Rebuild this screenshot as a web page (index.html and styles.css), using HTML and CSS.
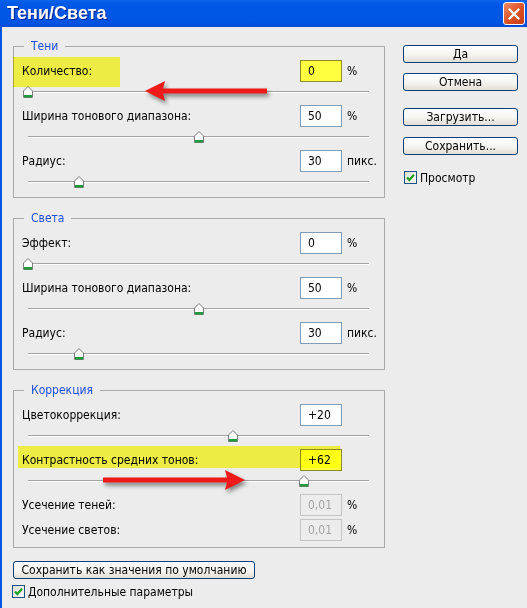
FILE: index.html
```html
<!DOCTYPE html>
<html lang="ru">
<head>
  <meta charset="UTF-8" />
  <title>Тени/Света</title>
  <link rel="stylesheet" href="styles.css">
</head>
<body>
  <!-- shared slider thumb -->
  <svg width="0" height="0" class="defs">
    <symbol id="thumb" viewBox="0 0 10 12">
      <path d="M0.5 5 L5 0.5 L9.5 5 L9.5 11.5 L0.5 11.5 Z" fill="#fff" stroke="#7d7d7d" />
      <rect x="1" y="9" width="8" height="2.5" fill="#1f9a3c" />
    </symbol>
  </svg>

  <div class="window">
    <div class="titlebar">
      <span class="title">Тени/Света</span>
      <span class="close">
        <svg width="12" height="12" viewBox="0 0 12 12">
          <path d="M1.5 1.5 L10.5 10.5 M10.5 1.5 L1.5 10.5" stroke="#fff" stroke-width="2.4" stroke-linecap="round" />
        </svg>
      </span>
    </div>

    <div class="content">
      <div class="main">
        <!-- Shadows -->
        <fieldset class="group">
          <legend>Тени</legend>
          <div class="field">
            <label>Количество:</label>
            <input class="num hot" value="0">
            <span class="unit">%</span>
          </div>
          <div class="slider"><div class="track"><svg class="thumb" style="left:0%"><use href="#thumb"/></svg></div></div>
          <div class="field">
            <label>Ширина тонового диапазона:</label>
            <input class="num" value="50">
            <span class="unit">%</span>
          </div>
          <div class="slider"><div class="track"><svg class="thumb" style="left:50%"><use href="#thumb"/></svg></div></div>
          <div class="field">
            <label>Радиус:</label>
            <input class="num" value="30">
            <span class="unit">пикс.</span>
          </div>
          <div class="slider"><div class="track"><svg class="thumb" style="left:15%"><use href="#thumb"/></svg></div></div>
        </fieldset>

        <!-- Highlights -->
        <fieldset class="group">
          <legend>Света</legend>
          <div class="field">
            <label>Эффект:</label>
            <input class="num" value="0">
            <span class="unit">%</span>
          </div>
          <div class="slider"><div class="track"><svg class="thumb" style="left:0%"><use href="#thumb"/></svg></div></div>
          <div class="field">
            <label>Ширина тонового диапазона:</label>
            <input class="num" value="50">
            <span class="unit">%</span>
          </div>
          <div class="slider"><div class="track"><svg class="thumb" style="left:50%"><use href="#thumb"/></svg></div></div>
          <div class="field">
            <label>Радиус:</label>
            <input class="num" value="30">
            <span class="unit">пикс.</span>
          </div>
          <div class="slider"><div class="track"><svg class="thumb" style="left:15%"><use href="#thumb"/></svg></div></div>
        </fieldset>

        <!-- Adjustments -->
        <fieldset class="group last">
          <legend>Коррекция</legend>
          <div class="field">
            <label>Цветокоррекция:</label>
            <input class="num" value="+20">
            <span class="unit"></span>
          </div>
          <div class="slider"><div class="track"><svg class="thumb" style="left:60%"><use href="#thumb"/></svg></div></div>
          <div class="field">
            <label>Контрастность средних тонов:</label>
            <input class="num hot" value="+62">
            <span class="unit"></span>
          </div>
          <div class="slider"><div class="track"><svg class="thumb" style="left:81%"><use href="#thumb"/></svg></div></div>
          <div class="field">
            <label>Усечение теней:</label>
            <input class="num" value="0,01" disabled>
            <span class="unit">%</span>
          </div>
          <div class="field gap">
            <label>Усечение светов:</label>
            <input class="num" value="0,01" disabled>
            <span class="unit">%</span>
          </div>
        </fieldset>

        <button class="btn wide">Сохранить как значения по умолчанию</button>
        <div class="check bottom">
          <span class="box"><svg width="11" height="11" viewBox="0 0 11 11"><path d="M2 5.5 L4.3 8 L9 2.8" fill="none" stroke="#21a121" stroke-width="2.2" /></svg></span>
          Дополнительные параметры
        </div>
      </div>

      <div class="side">
        <button class="btn">Да</button>
        <button class="btn cancel">Отмена</button>
        <button class="btn load">Загрузить...</button>
        <button class="btn save">Сохранить...</button>
        <div class="check preview">
          <span class="box"><svg width="11" height="11" viewBox="0 0 11 11"><path d="M2 5.5 L4.3 8 L9 2.8" fill="none" stroke="#21a121" stroke-width="2.2" /></svg></span>
          Просмотр
        </div>
      </div>
    </div>

    <!-- marker highlights and arrows drawn over the dialog -->
    <div class="mark mark-1"></div>
    <div class="mark mark-2"></div>
    <svg class="arrows" width="527" height="608" viewBox="0 0 527 608">
      <path d="M145 91 L165 81 L163 88.5 L267 88.5 L267 93.5 L163 93.5 L165 101 Z" />
      <path d="M103 477.5 L227 477.5 L225 470 L245 480 L225 490 L227 482.5 L103 482.5 Z" />
    </svg>
  </div>
</body>
</html>
```

FILE: styles.css
```css
/* General */
body {
  margin: 0;
  font-family: "DejaVu Sans Condensed", "DejaVu Sans", Verdana, sans-serif;
  font-stretch: condensed;
  font-size: 12px;
  background: #ececec;
}
.defs {
  position: absolute;
}
.window {
  position: relative;
  width: 527px;
  height: 608px;
  overflow: hidden;
  background: #ececec;
}
/* Title bar */
.titlebar {
  height: 27px;
  display: flex;
  align-items: center;
  justify-content: space-between;
  padding: 0 2px 0 7px;
  background: linear-gradient(#0b64ee, #0058e6 15%, #0054e3 85%, #0049d2);
  color: #fff;
}
.title {
  font-family: "Liberation Sans", Arial, sans-serif;
  font-stretch: normal;
  font-size: 18px;
  font-weight: bold;
  text-shadow: 1px 1px 0 #0a2390;
}
.close {
  width: 22px;
  height: 23px;
  box-sizing: border-box;
  border: 1px solid #fff;
  border-radius: 3px;
  background: linear-gradient(135deg, #f08a64, #dc4f24 55%, #c53c16);
  display: flex;
  align-items: center;
  justify-content: center;
}
/* Dialog body */
.content {
  display: flex;
  height: 581px;
  box-sizing: border-box;
  border-left: 2px solid #0055e5;
  padding: 12px 0 0 11px;
}
.main {
  width: 372px;
}
.side {
  width: 115px;
  margin-left: 18px;
  padding-top: 6px;
}
/* Group boxes */
.group {
  margin: 0;
  padding: 7px 0 2px 8px;
  border: 1px solid #a9a9a9;
  min-width: 0;
}
.group + .group {
  margin-top: 13px;
}
.group.last {
  padding-bottom: 6px;
}
.group legend {
  margin-left: 2px;
  padding: 0 7px;
  line-height: 14px;
  color: #1d4fdc;
}
.field {
  display: flex;
  align-items: center;
  height: 22px;
}
.field.gap {
  margin-top: 3px;
}
.field label {
  flex: 1;
}
.num {
  width: 42px;
  height: 22px;
  box-sizing: border-box;
  margin: 0;
  padding: 0 0 0 7px;
  border: 1px solid #7f9db9;
  background: #fff;
  font: inherit;
  color: #000;
}
.num.hot {
  background: #ffff40;
  border-color: #8c8c2a;
}
.num:disabled {
  background: #ececec;
  border-color: #c4c4c4;
  color: #a3a3a3;
}
.unit {
  width: 37px;
  margin-left: 5px;
}
/* Sliders */
.slider {
  height: 23px;
  box-sizing: border-box;
  padding-top: 9px;
  margin: 0 15px 0 6px;
}
.track {
  position: relative;
  border-top: 1px solid #a3a3a3;
  border-bottom: 1px solid #fff;
}
.thumb {
  position: absolute;
  top: -6px;
  width: 10px;
  height: 12px;
  transform: translateX(-50%);
}
/* Buttons */
.btn {
  display: block;
  width: 115px;
  height: 18px;
  box-sizing: border-box;
  padding: 0;
  border: 1px solid #003c74;
  border-radius: 3px;
  background: linear-gradient(#ffffff, #f5f4f0 55%, #e1ded5);
  font: inherit;
  color: #000;
}
.btn.cancel {
  margin-top: 10px;
}
.btn.load {
  margin-top: 17px;
}
.btn.save {
  margin-top: 11px;
}
.btn.wide {
  width: 242px;
  margin-top: 13px;
}
/* Checkboxes */
.check {
  display: flex;
  align-items: center;
  height: 13px;
}
.check .box {
  width: 13px;
  height: 13px;
  box-sizing: border-box;
  margin-right: 3px;
  border: 1px solid #1c5180;
  background: linear-gradient(135deg, #dcdcd6, #fff);
  display: flex;
  align-items: center;
  justify-content: center;
}
.check.bottom {
  margin: 6px 0 0 -1px;
}
.check.preview {
  margin: 16px 0 0 1px;
}
/* Marker highlights and arrows */
.mark {
  position: absolute;
  background: #ffff4a;
  mix-blend-mode: multiply;
}
.mark-1 {
  left: 13px;
  top: 57px;
  width: 107px;
  height: 30px;
}
.mark-2 {
  left: 18px;
  top: 446px;
  width: 322px;
  height: 22px;
}
.arrows {
  position: absolute;
  top: 0;
  left: 0;
  pointer-events: none;
  fill: #ee1a1a;
  filter: drop-shadow(2px 3px 2px rgba(0, 0, 0, 0.45));
}
```
